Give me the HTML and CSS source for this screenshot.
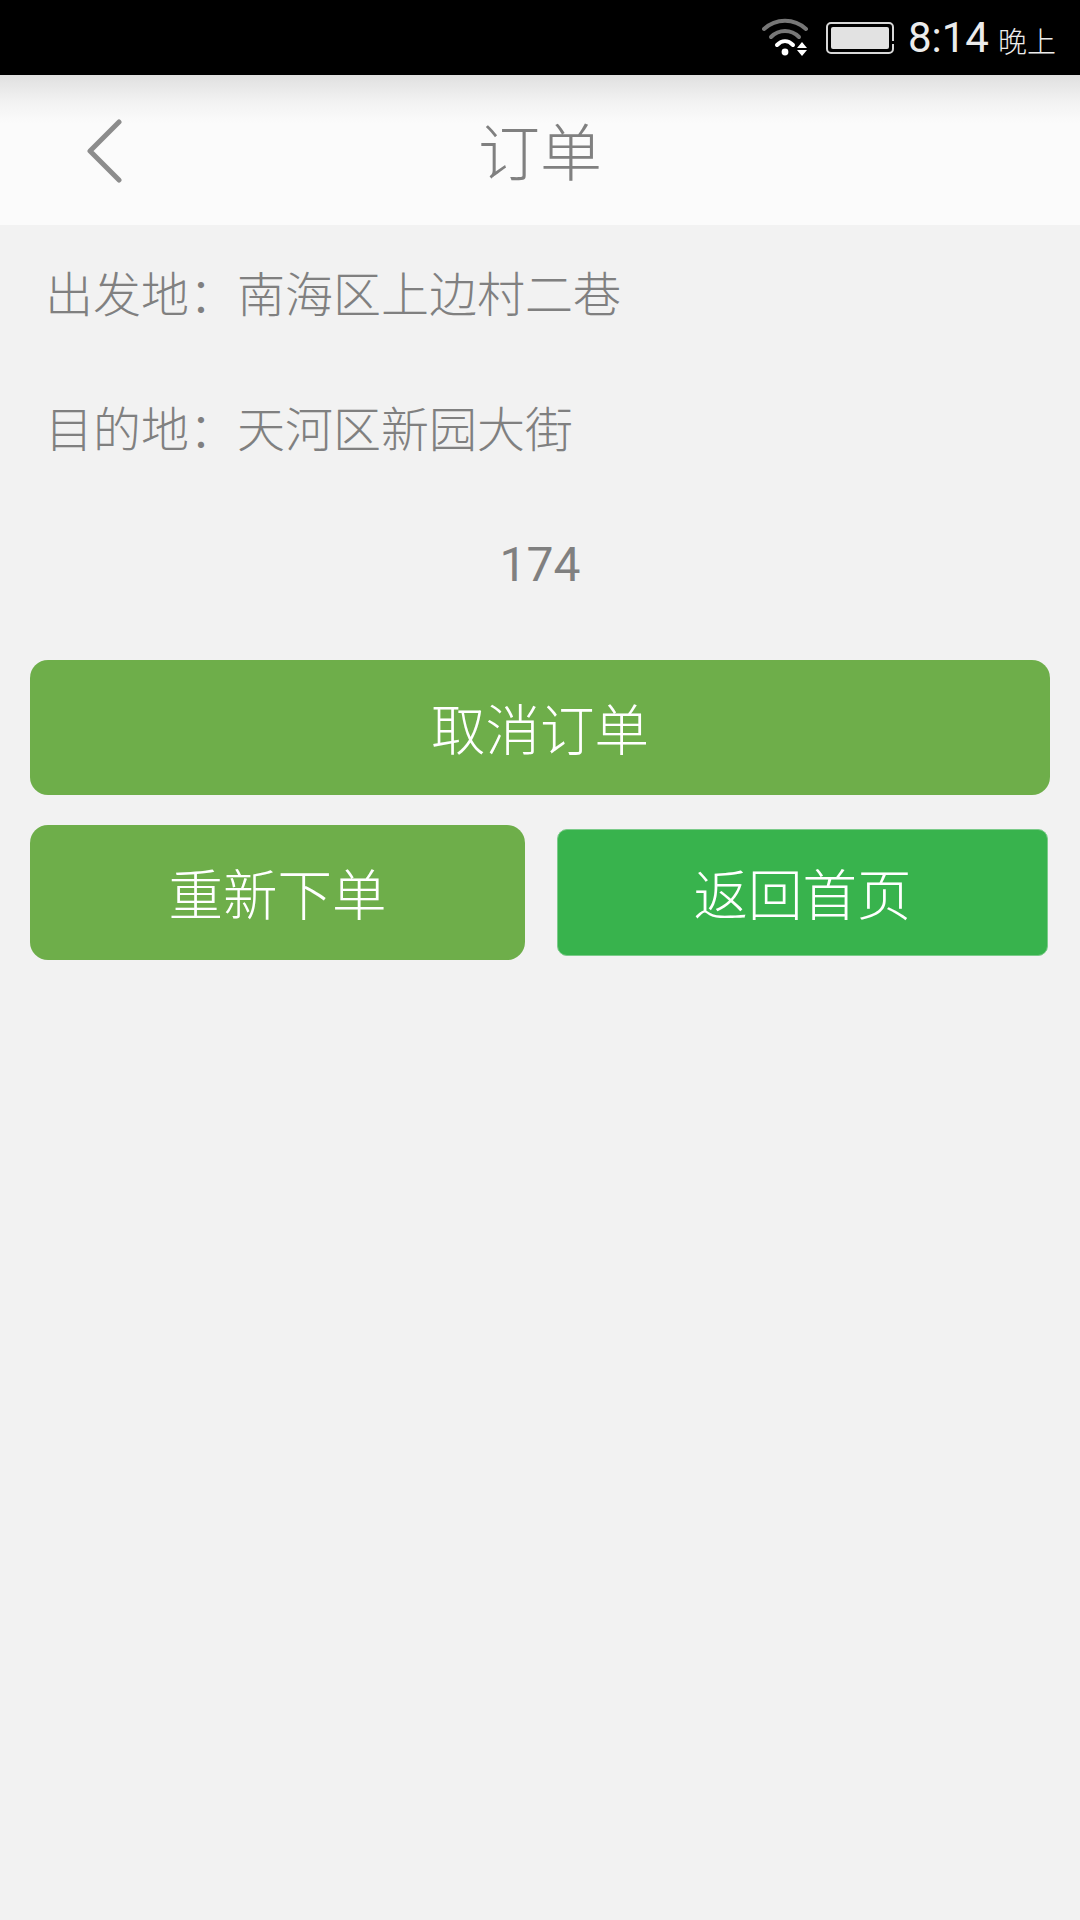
FILE: index.html
```html
<!DOCTYPE html>
<html lang="zh-CN">
<head>
<meta charset="utf-8">
<title>订单</title>
<link rel="stylesheet" href="styles.css">
</head>
<body>
<div class="status-bar">
  <svg class="wifi" width="48" height="40" viewBox="0 0 48 40" aria-hidden="true">
    <path class="arc-dim" d="M2 11 C14 0 32 0 44 11"/>
    <path class="arc-dim" d="M9 19 C17 11 29 11 37 19"/>
    <path class="arc-on" d="M15 27 C20 22 26 22 31 27"/>
    <circle class="fill-on" cx="23" cy="34" r="3.4"/>
    <path class="fill-on" d="M40 24 L45 30 L35 30 Z M35 32 L45 32 L40 38 Z"/>
  </svg>
  <div class="battery"><div class="battery-level"></div></div>
  <span class="clock">8:14</span>
  <span class="ampm">晚上</span>
</div>
<header class="title-bar">
  <svg class="back" width="40" height="64" viewBox="0 0 40 64" aria-hidden="true">
    <path d="M35 3 L6 32 L35 61"/>
  </svg>
  <h1 class="title">订单</h1>
</header>
<main class="content">
  <div class="info-row">出发地：南海区上边村二巷</div>
  <div class="info-row">目的地：天河区新园大街</div>
  <div class="info-row info-center">174</div>
  <div class="actions">
    <button class="btn btn-olive">取消订单</button>
    <div class="btn-row">
      <button class="btn btn-olive btn-half">重新下单</button>
      <button class="btn btn-green">返回首页</button>
    </div>
  </div>
</main>
</body>
</html>
```
FILE: styles.css
```css
* { box-sizing: border-box; }
html, body { margin: 0; padding: 0; }
body {
  width: 1080px;
  height: 1920px;
  background: #f2f2f2;
  font-family: "Noto Sans CJK SC", "Noto Sans", sans-serif;
  font-weight: 300;
  overflow: hidden;
}
.status-bar {
  height: 75px;
  background: #000;
  display: flex;
  align-items: center;
  justify-content: flex-end;
  padding-right: 24px;
  color: #ececec;
}
.wifi { margin-right: 16px; }
.arc-dim { fill: none; stroke: #777; stroke-width: 4; stroke-linecap: round; }
.arc-on { fill: none; stroke: #fff; stroke-width: 4; stroke-linecap: round; }
.fill-on { fill: #fff; }
.battery {
  position: relative;
  width: 68px;
  height: 32px;
  border: 2px solid #d8d8d8;
  border-radius: 5px;
  padding: 3px;
  margin-right: 14px;
}
.battery::after {
  content: "";
  position: absolute;
  right: -2px;
  top: 17px;
  width: 2px;
  height: 3px;
  background: #000;
}
.battery-level { width: 100%; height: 100%; background: #e2e2e2; border-radius: 2px; }
.clock {
  font-family: Roboto, sans-serif;
  font-weight: 400;
  font-size: 42px;
  line-height: 48px;
  margin-right: 9px;
}
.ampm { font-size: 29px; line-height: 40px; margin-top: 4px; }
.title-bar {
  height: 150px;
  position: relative;
  display: flex;
  align-items: center;
  justify-content: center;
  background: linear-gradient(#e0e0e0 0, #f3f3f3 28px, #fbfbfb 48px, #fbfbfb 100%);
}
.back { position: absolute; left: 84px; top: 44px; }
.back path { fill: none; stroke: #8c8c8c; stroke-width: 5; stroke-linecap: round; stroke-linejoin: round; }
.title { margin: 0 0 3px; font-size: 62px; font-weight: 300; color: #808080; line-height: 1; }
.content { display: flex; flex-direction: column; }
.info-row {
  height: 135px;
  display: flex;
  align-items: center;
  padding: 0 0 4px 45px;
  font-size: 48px;
  color: #808080;
}
.info-center {
  justify-content: center;
  padding: 4px 0 0;
  font-family: Roboto, sans-serif;
  font-weight: 400;
}
.actions { padding: 30px 30px 0; display: flex; flex-direction: column; gap: 30px; }
.btn {
  height: 135px;
  border: 0;
  border-radius: 18px;
  padding: 0 0 3px;
  color: #fff;
  font-family: inherit;
  font-weight: 300;
  font-size: 54.5px;
  display: block;
}
.btn-olive { background: #6eae4a; }
.btn-row { display: flex; align-items: center; justify-content: space-between; padding-right: 2px; }
.btn-half { width: 495px; }
.btn-green {
  width: 491px;
  height: 127px;
  background: #38b34d;
  border: 1px solid #7ccb8a;
  border-radius: 10px;
}
```
